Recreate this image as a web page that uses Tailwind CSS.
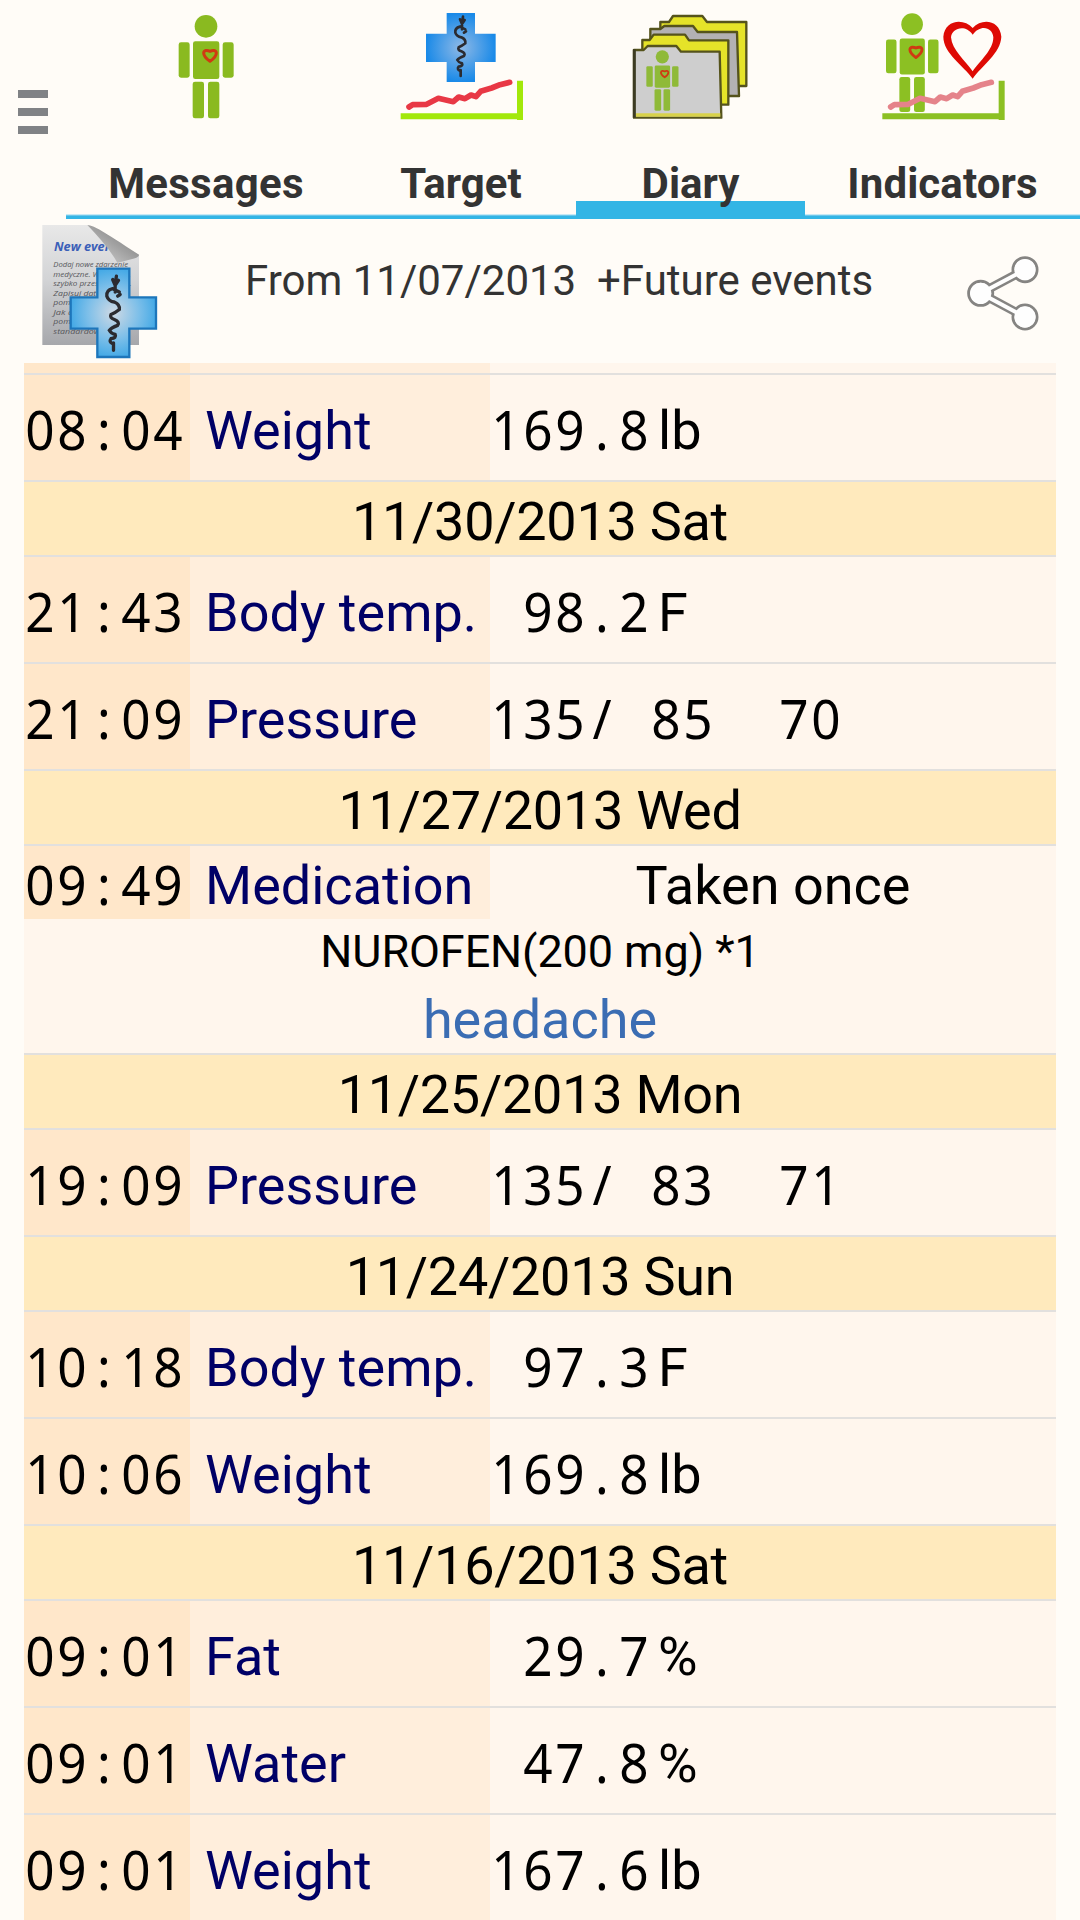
<!DOCTYPE html>
<html lang="en">
  <head>
    <meta charset="UTF-8" />
    <meta name="viewport" content="width=device-width, initial-scale=1.0" />
    <title>Health Diary</title>
    <script src="https://cdn.jsdelivr.net/npm/@tailwindcss/browser@4"></script>
  </head>
  <body class="bg-[#fffcf7] w-[1080px] h-[1920px] overflow-hidden font-['Roboto',sans-serif] text-black">
    <!-- Shared icon parts -->
    <svg class="absolute w-0 h-0">
      <defs>
        <radialGradient id="blue">
          <stop offset="0" stop-color="#8fb9e6" />
          <stop offset="1" stop-color="#1a8ae8" />
        </radialGradient>
        <radialGradient id="sky">
          <stop offset="0" stop-color="#cfd9e4" />
          <stop offset="0.6" stop-color="#7dbfe9" />
          <stop offset="1" stop-color="#46aae6" />
        </radialGradient>
        <linearGradient id="paper" x1="0" y1="0" x2="0" y2="1">
          <stop offset="0" stop-color="#e8e8e8" />
          <stop offset="0.45" stop-color="#d3d4d6" />
          <stop offset="1" stop-color="#a6a7ab" />
        </linearGradient>
        <linearGradient id="fold" x1="0" y1="1" x2="1" y2="0">
          <stop offset="0.2" stop-color="#c4c4c4" />
          <stop offset="0.5" stop-color="#a2a2a2" />
          <stop offset="0.8" stop-color="#858585" />
        </linearGradient>
        <g id="person">
          <circle cx="82" cy="35" r="34" />
          <rect x="0" y="83" width="33" height="106" rx="7" />
          <rect x="132" y="83" width="33" height="106" rx="7" />
          <rect x="43" y="80" width="79" height="113" rx="7" />
          <rect x="42" y="201" width="34" height="110" rx="7" />
          <rect x="88" y="201" width="34" height="110" rx="7" />
          <path d="M94 140 C84 133 75 124 75 115 C76 106 86 106 94 110 C102 106 112 106 113 115 C113 124 104 133 94 140 Z" fill="none" stroke="#cf3a12" stroke-width="9" stroke-linejoin="round" />
        </g>
        <path id="trend" d="M147 321 L158 314 L200 313 L235 295 L280 305 L296 291 L315 296 L333 285 L348 290 L362 274 L395 264 L420 254 L449 247" fill="none" stroke-width="17" stroke-linecap="round" stroke-linejoin="round" />
        <path id="axis" d="M122 340 H471 V242 H489 V360 H471 V358 H122 Z" />
        <path id="snake" d="M309 50 L307 62 M300 58 L306 72 L314 60 M306 66 V88 M316 88 L300 80 Q284 84 286 98 Q290 110 304 112 Q318 118 316 130 Q306 138 296 142 Q292 150 304 154 Q318 160 312 168 Q296 174 292 180 Q296 188 306 190 Q310 198 296 200 Q290 208 300 212 M302 210 V228 M312 98 L318 94" fill="none" stroke="#2b2b30" stroke-linecap="round" />
      </defs>
    </svg>

    <!-- Tabs -->
    <header class="flex h-[219px]">
      <div class="w-[66px] pl-[18px] pt-[90px] flex flex-col gap-[10px]">
        <div class="w-[30px] h-2 bg-[#808285]"></div>
        <div class="w-[30px] h-2 bg-[#808285]"></div>
        <div class="w-[30px] h-2 bg-[#808285]"></div>
      </div>
      <nav class="flex text-[42px] leading-[50px] font-bold text-[#333333]">
        <div class="w-[280px] h-[219px] flex flex-col items-center border-b-3 border-[#33b5e5] shadow-[inset_0_-1px_#6cc6ea,inset_0_-2px_#c5e9f5]">
          <svg class="w-[60px] h-[125px] shrink-0" viewBox="528 0 180 375">
            <use href="#person" x="536" y="44" fill="#8aba20" />
          </svg>
          <span class="mt-[34px] tracking-[0.3px]">Messages</span>
        </div>
        <div class="w-[230px] h-[219px] flex flex-col items-center border-b-3 border-[#33b5e5] shadow-[inset_0_-1px_#6cc6ea,inset_0_-2px_#c5e9f5]">
          <svg class="w-[124px] h-[125px] shrink-0 overflow-visible" viewBox="117 0 372 375">
            <path d="M260 39 H345 V101 H407 V186 H345 V246 H260 V186 H198 V101 H260 Z" fill="url(#blue)" />
            <use href="#snake" stroke-width="8" />
            <use href="#trend" stroke="#e83845" />
            <use href="#axis" fill="#a2e80a" />
          </svg>
          <span class="mt-[34px]">Target</span>
        </div>
        <div class="w-[229px] h-[219px] flex flex-col items-center border-b-18 border-[#33b5e5]">
          <svg class="w-[120px] h-[125px] shrink-0" viewBox="92 0 360 375">
            <g stroke="#55531c" stroke-width="7" stroke-linejoin="round">
              <path d="M180 66 H206 L218 48 H306 L320 66 H438 V258 H180 Z" fill="#e5e329" />
              <path d="M150 87 H180 L192 78 H278 L292 96 H410 L416 288 H150 Z" fill="#b3b1b3" />
              <path d="M126 120 H148 L160 104 H254 L266 121 H384 V314 H126 Z" fill="#e5e329" />
              <path d="M101 150 H130 L142 138 H228 L242 155 H358 L363 353 H101 Z" fill="#cecece" />
            </g>
            <path d="M106 340 H360 V350 H106 Z" fill="#d8d24a" />
            <path d="M102 148 V353" stroke="#3c3b22" stroke-width="9" />
            <use href="#person" fill="#8fba38" transform="translate(138 150) scale(.585)" />
          </svg>
          <span class="mt-[34px]">Diary</span>
        </div>
        <div class="w-[275px] h-[219px] flex flex-col items-center border-b-3 border-[#33b5e5] shadow-[inset_0_-1px_#6cc6ea,inset_0_-2px_#c5e9f5]">
          <svg class="w-[127px] h-[125px] shrink-0" viewBox="147 0 381 375">
            <use href="#person" fill="#8cc023" transform="translate(168 39) scale(.955)" />
            <path fill-rule="evenodd" d="M428 236 C400 196 340 160 340 110 C344 60 400 52 428 84 C456 52 510 60 514 110 C512 160 456 196 428 236 Z M428 214 C450 182 490 150 490 112 C488 80 450 72 428 104 C406 72 366 84 363 112 C366 150 406 182 428 214 Z" fill="#de0a04" />
            <use href="#trend" x="35" stroke="#e5838a" />
            <use href="#axis" x="35" fill="#8cc023" />
          </svg>
          <span class="mt-[34px] tracking-[0.1px]">Indicators</span>
        </div>
      </nav>
    </header>

    <!-- Filter bar -->
    <section class="flex h-36 pl-10 pr-[39px] text-[#333333]">
      <svg class="w-[120px] h-36" viewBox="120 27 360 432">
        <path d="M127 45 H262 L417 134 V405 H127 Z" fill="url(#paper)" />
        <text x="162" y="122" class="font-['Open_Sans'] font-bold italic" font-size="38" textLength="168" lengthAdjust="spacingAndGlyphs" fill="#3b5fb8">New ever</text>
        <g class="font-['Open_Sans'] italic" font-size="24" fill="#55565a">
          <text x="160" y="171" textLength="224" lengthAdjust="spacingAndGlyphs">Dodaj nowe zdarzenie</text>
          <text x="160" y="200" textLength="232" lengthAdjust="spacingAndGlyphs">medyczne. Wybierz je,</text>
          <text x="160" y="229" textLength="235" lengthAdjust="spacingAndGlyphs">szybko przeskocz do...</text>
          <text x="160" y="258" textLength="200" lengthAdjust="spacingAndGlyphs">Zapisuj datę oraz</text>
          <text x="160" y="286" textLength="200" lengthAdjust="spacingAndGlyphs">pomiary ciśnienia</text>
          <text x="160" y="314" textLength="200" lengthAdjust="spacingAndGlyphs">Jak dodać więcej</text>
          <text x="160" y="343" textLength="200" lengthAdjust="spacingAndGlyphs">pomiarów oraz le</text>
          <text x="160" y="371" textLength="200" lengthAdjust="spacingAndGlyphs">standardowe leki</text>
        </g>
        <path d="M262 44 H420 V134 Z" fill="#fffcf7" />
        <path d="M262 45 C285 48 300 58 417 134 C417 144 400 146 352 158 C330 120 300 84 262 45 Z" fill="url(#fold)" />
        <path d="M292 176 H388 V262 H468 V356 H388 V441 H292 V356 H212 V262 H292 Z" fill="url(#sky)" stroke="#1d76bb" stroke-width="7" />
        <use href="#snake" stroke-width="8" transform="translate(-37 136) scale(1.25)" />
      </svg>
      <div class="pl-[85px] pt-[37px] text-[42px] leading-[50px] whitespace-pre">From 11/07/2013  +Future events</div>
      <svg class="w-[76px] h-[78px] mt-[35px] ml-auto" viewBox="195 132 228 234">
        <g fill="none" stroke="#858482">
          <path d="M375 179 L242 250 L375 321" stroke-width="27" />
          <g stroke-width="9">
            <circle cx="242" cy="250" r="36" />
            <circle cx="375" cy="179" r="36" />
            <circle cx="375" cy="321" r="36" />
          </g>
        </g>
        <g fill="#fefefe">
          <circle cx="242" cy="250" r="32" />
          <circle cx="375" cy="179" r="32" />
          <circle cx="375" cy="321" r="32" />
          <path d="M375 179 L242 250 L375 321" fill="none" stroke="#fefefe" stroke-width="12" />
        </g>
      </svg>
    </section>

    <!-- Diary entries -->
    <main class="mx-6 w-[1032px] bg-[#fff6ed] text-[54px] leading-[79px]">
      <div class="flex h-[10px]">
        <div class="w-[166px] bg-[#ffe7ca]"></div>
        <div class="w-[300px] bg-[#ffeedc]"></div>
      </div>
      <div id="diary"></div>
    </main>

    <script>
      const entries = [
        { time: "08:04", name: "Weight", value: "169.8", unit: "lb" },
        { day: "11/30/2013 Sat" },
        { time: "21:43", name: "Body temp.", value: " 98.2", unit: "F" },
        { time: "21:09", name: "Pressure", value: "135/ 85  70" },
        { day: "11/27/2013 Wed" },
        { time: "09:49", name: "Medication", status: "Taken once", drug: "NUROFEN(200 mg) *1", note: "headache" },
        { day: "11/25/2013 Mon" },
        { time: "19:09", name: "Pressure", value: "135/ 83  71" },
        { day: "11/24/2013 Sun" },
        { time: "10:18", name: "Body temp.", value: " 97.3", unit: "F" },
        { time: "10:06", name: "Weight", value: "169.8", unit: "lb" },
        { day: "11/16/2013 Sat" },
        { time: "09:01", name: "Fat", value: " 29.7", unit: "%" },
        { time: "09:01", name: "Water", value: " 47.8", unit: "%" },
        { time: "09:01", name: "Weight", value: "167.6", unit: "lb" },
      ];

      // fixed-width characters, one cell each
      const mono = (s) =>
        [...s].map((c) => `<span class="inline-block w-8 -translate-y-px scale-x-95 text-center whitespace-pre font-['Noto_Sans']">${c}</span>`).join("");

      const row = (e) => {
        if (e.day) {
          return `<div class="h-[75px] border-t-2 border-[#e2e0de] bg-[#ffeabd] text-center tracking-[-0.27px]">${e.day}</div>`;
        }
        if (e.drug) {
          return `<div class="h-[209px] border-t-2 border-[#e2e0de] text-center">
            <div class="flex h-[73px]">
              <div class="w-[166px] bg-[#ffe7ca] text-left whitespace-nowrap">${mono(e.time)}</div>
              <div class="w-[300px] pl-[15px] bg-[#ffeedc] text-left text-[#000066]">${e.name}</div>
              <div class="flex-1">${e.status}</div>
            </div>
            <div class="h-[61px] text-[45px] leading-[65px] tracking-[-0.1px]">${e.drug}</div>
            <div class="h-[73px] text-[#3b6db3]">${e.note}</div>
          </div>`;
        }
        return `<div class="flex h-[107px] border-t-2 border-[#e2e0de] leading-[111px]">
          <div class="w-[166px] bg-[#ffe7ca] whitespace-nowrap">${mono(e.time)}</div>
          <div class="w-[300px] pl-[15px] bg-[#ffeedc] text-[#000066]">${e.name}</div>
          <div class="flex whitespace-nowrap"><span>${mono(e.value)}</span><span class="pl-2">${e.unit || ""}</span></div>
        </div>`;
      };

      document.getElementById("diary").innerHTML = entries.map(row).join("");
    </script>
  </body>
</html>
